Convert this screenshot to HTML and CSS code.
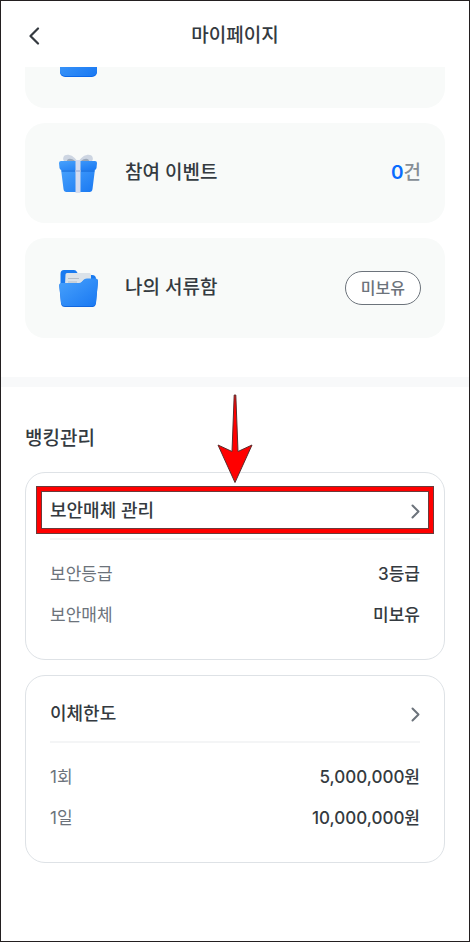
FILE: index.html
```html
<!DOCTYPE html>
<html lang="ko">
<head>
    <meta charset="UTF-8">
    <meta name="viewport" content="width=device-width, initial-scale=1.0">
    <title>마이페이지</title>
    <link rel="stylesheet" href="styles.css">
</head>
<body>

    <header class="header">
        <button class="back" type="button" aria-label="뒤로">
            <svg width="12" height="18" viewBox="0 0 12 18"><path d="M10 1.5L2.5 9L10 16.5" fill="none" stroke="#343a40" stroke-width="2.2" stroke-linecap="round" stroke-linejoin="round"/></svg>
        </button>
        <h1>마이페이지</h1>
    </header>

    <main>
        <ul class="menu">
            <li class="menu-item">
                <svg class="menu-icon" width="42" height="42" viewBox="0 0 42 42">
                    <defs>
                        <linearGradient id="blue" x1="0" y1="0" x2="1" y2="1">
                            <stop offset="0" stop-color="#49a2fc"/>
                            <stop offset="1" stop-color="#1978f2"/>
                        </linearGradient>
                    </defs>
                    <rect x="3" y="5" width="37" height="35" rx="5" fill="#0b68ea"/>
                    <rect x="3" y="4" width="37" height="35" rx="5" fill="url(#blue)"/>
                </svg>
            </li>
            <li class="menu-item">
                <svg class="menu-icon" width="42" height="42" viewBox="0 0 42 42">
                    <path d="M20 9C16 2 8 1 6.500 5C5 9 8 12 20 10Z" fill="#cdd5e2"/>
                    <path d="M22 9C26 2 34 1 35.500 5C37 9 34 12 22 10Z" fill="#cdd5e2"/>
                    <path d="M18 9C14 5.500 10 6 9.500 10H18ZM24 9C28 5.500 32 6 32.500 10H24Z" fill="#9aa7b8"/>
                    <path d="M4 17H38L35.500 37Q35.200 40 32.500 40H9.500Q6.800 40 6.500 37Z" fill="url(#blue)"/>
                    <path d="M4.500 18H37.500L37.300 20H4.700Z" fill="#1268d8" opacity=".55"/>
                    <path d="M4 9H38Q40 9 40 11L39.500 16Q39.300 18 37 18H5Q2.700 18 2.500 16L2 11Q2 9 4 9Z" fill="url(#blue)"/>
                    <path d="M18.500 8H23.500V41H18.500Z" fill="#d5dcef"/>
                    <path d="M18.500 18H23.500V20H18.500Z" fill="#b4c1e0"/>
                </svg>
                <span class="menu-label">참여 이벤트</span>
                <span class="count"><em>0</em>건</span>
            </li>
            <li class="menu-item">
                <svg class="menu-icon" width="42" height="42" viewBox="0 0 42 42">
                    <path d="M3.500 18V7Q3.500 3 7 3H17Q19 3 20 5L21.500 8H35Q39 8 39 12V18Z" fill="#197af0"/>
                    <path d="M8 18L8.500 7.500Q8.500 6 10 6H32.500Q34 6 34 8V18Z" fill="#dbe2e9"/>
                    <path d="M11 11.500H22M11 15H20" stroke="#b5bec8" stroke-width="1"/>
                    <path d="M4.500 16.500H22Q23.500 16.500 24.500 15.500L27 13Q28.500 12 30 12H39Q41 12 41 14.500L39 36Q38.500 40 35.500 40H8Q4.500 40 4 36.500L2.300 19Q2 16.500 4.500 16.500Z" fill="#1267df"/>
                    <path d="M4.500 16H22Q23.500 16 24.500 15L27 12.500Q28.500 11.500 30 11.500H39Q41 11.500 41 14L39 35Q38.500 39 35.500 39H8Q4.500 39 4 35.500L2.300 18.500Q2 16 4.500 16Z" fill="url(#blue)"/>
                </svg>
                <span class="menu-label">나의 서류함</span>
                <button class="pill" type="button">미보유</button>
            </li>
        </ul>

        <section class="banking">
            <h2>뱅킹관리</h2>

            <article class="card">
                <a class="card-title" href="#">
                    <span>보안매체 관리</span>
                    <svg width="9" height="15" viewBox="0 0 9 15"><path d="M1.500 1.500L7.500 7.500L1.500 13.500" fill="none" stroke="#6c737b" stroke-width="2" stroke-linecap="round" stroke-linejoin="round"/></svg>
                    <span class="highlight"></span>
                    <svg class="arrow" width="36" height="90" viewBox="0 0 36 90"><path d="M17.200 1H18.800L21 57.500L35 51L18 88.500L1 51L15 57.500Z" fill="#ff0000" stroke="#5c2c2c" stroke-width="1"/></svg>
                </a>
                <dl class="rows">
                    <div><dt>보안등급</dt><dd>3등급</dd></div>
                    <div><dt>보안매체</dt><dd>미보유</dd></div>
                </dl>
            </article>

            <article class="card">
                <a class="card-title" href="#">
                    <span>이체한도</span>
                    <svg width="9" height="15" viewBox="0 0 9 15"><path d="M1.500 1.500L7.500 7.500L1.500 13.500" fill="none" stroke="#6c737b" stroke-width="2" stroke-linecap="round" stroke-linejoin="round"/></svg>
                </a>
                <dl class="rows">
                    <div><dt>1회</dt><dd>5,000,000원</dd></div>
                    <div><dt>1일</dt><dd>10,000,000원</dd></div>
                </dl>
            </article>
        </section>
    </main>

</body>
</html>
```
FILE: styles.css
```css
* {
    box-sizing: border-box;
    margin: 0;
    padding: 0;
}

body {
    min-height: 100vh;
    border: 1px solid #231f20;
    background: white;
    color: #343a40;
    font-family: Inter, "Noto Sans CJK KR", sans-serif;
    font-weight: 500;
}

button {
    font: inherit;
    color: inherit;
    cursor: pointer;
}

svg {
    display: block;
    flex-shrink: 0;
}

.header {
    display: grid;
    grid-template-columns: 24px 1fr 24px;
    align-items: center;
    height: 66px;
    padding: 4px 24px 0;
}

.header h1 {
    font-size: 19px;
    font-weight: 500;
    line-height: 30px;
    text-align: center;
}

.back {
    display: flex;
    padding: 4px 3px;
    border: none;
    background: none;
}

/* Menu cards, the first one is scrolled under the header */
.menu {
    display: flex;
    flex-direction: column;
    gap: 15px;
    overflow: hidden;
    padding: 0 24px 39px;
    list-style: none;
}

.menu-item {
    display: flex;
    align-items: center;
    gap: 26px;
    height: 100px;
    padding: 0 24px 0 32px;
    border-radius: 20px;
    background: #f8faf9;
}

.menu-item:first-child {
    margin-top: -59px;
}

.menu-label {
    flex: 1;
    font-size: 19px;
    line-height: 28px;
}

.count {
    color: #868e96;
    font-size: 19px;
    line-height: 28px;
}

.count em {
    color: #0a6cff;
    font-style: normal;
    font-weight: 600;
}

.pill {
    padding: 3px 15px;
    border: 1px solid #6c737b;
    border-radius: 17px;
    background: white;
    color: #6c737b;
    font-size: 16px;
    line-height: 26px;
}

.banking {
    display: flex;
    flex-direction: column;
    gap: 15px;
    padding: 37px 24px 24px;
    border-top: 10px solid #f8f9fa;
}

.banking h2 {
    margin-bottom: 3px;
    font-size: 19px;
    font-weight: 500;
    line-height: 30px;
}

.card {
    padding: 24px 24px 30px;
    border: 1px solid #dee2e6;
    border-radius: 20px;
}

.card-title {
    position: relative;
    display: flex;
    align-items: center;
    justify-content: space-between;
    color: inherit;
    font-size: 18px;
    line-height: 28px;
    text-decoration: none;
}

/* Red callout around the menu entry */
.highlight {
    position: absolute;
    inset: -11px -14px -9px;
    border: 6px solid #ff0000;
    outline: 1px solid #6b3a3a;
    outline-offset: -1px;
}

.highlight::after {
    content: "";
    position: absolute;
    inset: -1px;
    border: 1px solid #6b3a3a;
}

.arrow {
    position: absolute;
    bottom: 41px;
    left: 50%;
    margin-left: -18px;
}

.rows {
    display: flex;
    flex-direction: column;
    gap: 14px;
    margin-top: 13px;
    padding-top: 21px;
    border-top: 2px solid #f4f5f6;
    font-size: 17px;
    line-height: 27px;
}

.rows div {
    display: flex;
    justify-content: space-between;
}

.rows dt {
    color: #6c737b;
    font-weight: 400;
}
```
